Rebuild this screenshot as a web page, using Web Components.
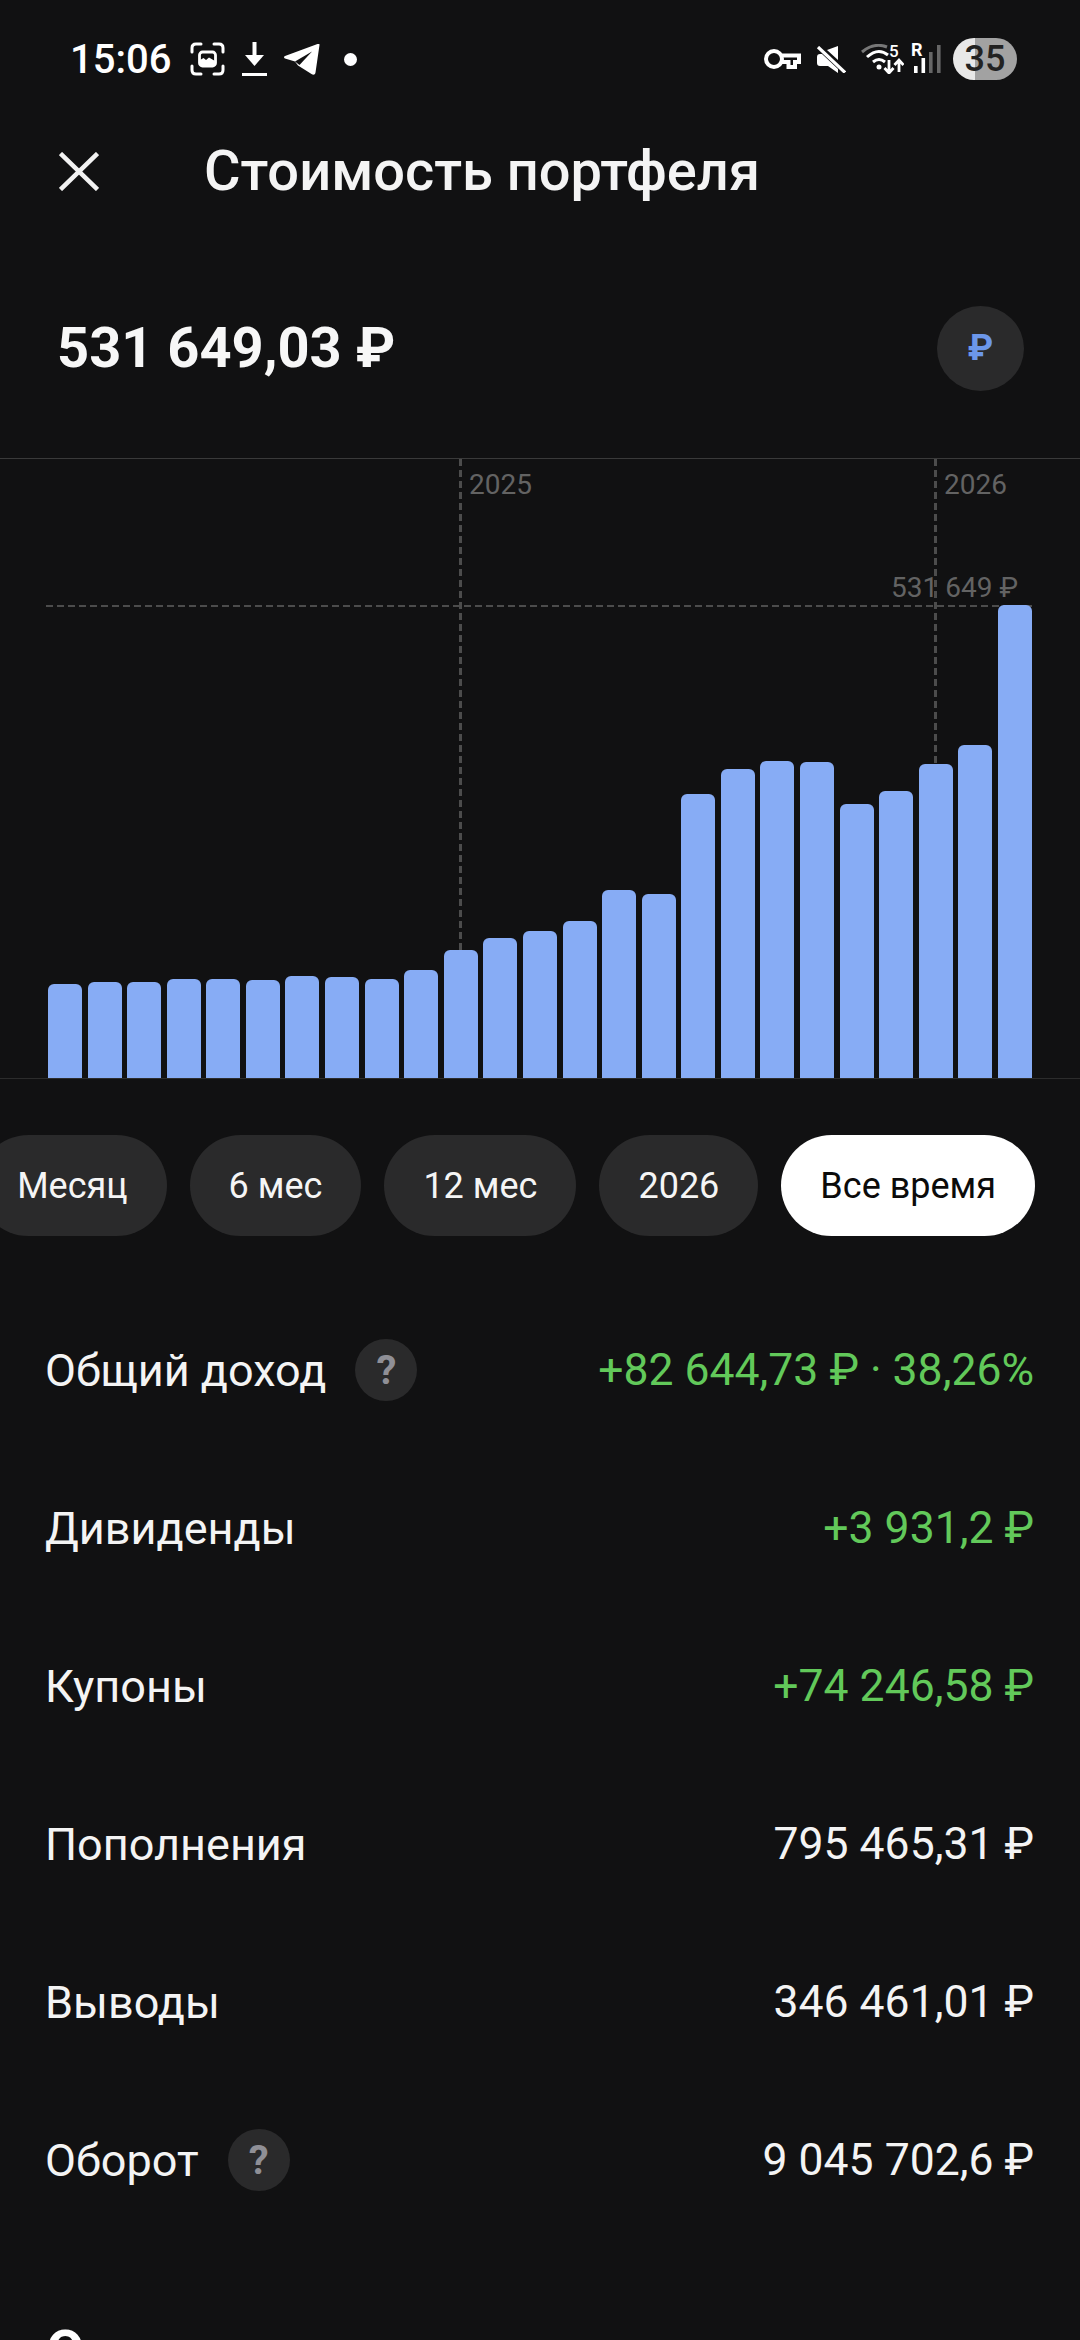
<!DOCTYPE html>
<html lang="ru">
<head>
<meta charset="utf-8">
<title>Стоимость портфеля</title>
<style>
html, body { margin: 0; background: #111112; }
body { width: 1080px; height: 2340px; overflow: hidden; font-family: Roboto, "Liberation Sans", sans-serif; color: #fff; }
</style>
</head>
<body>
<portfolio-screen></portfolio-screen>

<script>
const ICONS = {
    shot: '<svg width="35" height="34" viewBox="0 0 35 34" fill="none" stroke="#fff" stroke-width="3" stroke-linecap="round"><path d="M2 10V6q0-4 4-4h5M24 2h5q4 0 4 4v4M33 24v4q0 4-4 4h-5M11 32H6q-4 0-4-4v-4"/><rect x="9.500" y="10" width="16" height="14" rx="3" stroke-width="2.800"/><path d="M10 24v-6l3.500-2 2.500 2 3-2.500 6 3.500v5z" fill="#fff" stroke="none"/></svg>',
    download: '<svg width="25" height="34" viewBox="0 0 25 34" fill="none" stroke="#fff"><path d="M12.500 0v16" stroke-width="4"/><path d="M3 13h19l-9.500 11z" fill="#fff" stroke="none"/><path d="M0 32.500h25" stroke-width="3"/></svg>',
    telegram: '<svg width="36" height="31" viewBox="0 0 36 31" fill="#fff"><path d="M35.500 1 31.500 28.500c-.3 2-2 2.800-3.600 1.800L14 21.500l-3-4L1 14.500C-.3 14-.3 12.600 1 12L33.500 0c1.300-.4 2.200 0 2 1z"/><path d="M11 17.500 28 7.500 15.500 21z" fill="#111112"/></svg>',
    key: '<svg width="37" height="20" viewBox="0 0 37 20" fill="none" stroke="#fff" stroke-width="4"><circle cx="10" cy="10" r="8"/><path d="M18 6.500h17v6.500h-4v5h-6.500v-5H17"/></svg>',
    mute: '<svg width="30" height="27" viewBox="0 0 30 27" fill="#fff"><path d="M22 0v14L11 4zM4 8h2l16 15v4L12 20H4q-3 0-3-3v-6q0-3 3-3z"/><path d="M2 1l27 25.500" stroke="#fff" stroke-width="3.200" fill="none"/></svg>',
    wifi: '<svg width="43" height="30" viewBox="0 0 43 30" fill="none" stroke-width="3"><path d="M1 8Q13-2 26 3" stroke="#777"/><path d="M6 13Q17 3 27 11" stroke="#fff"/><path d="M12 18q6-5 12 0" stroke="#fff"/><circle cx="18" cy="23" r="2.500" fill="#fff" stroke="none"/><path d="M28 16v13M23.500 24l4.500 5 4.500-5M38 28V16M33.500 21l4.500-5 4.500 5" stroke="#fff" stroke-width="2.800"/></svg>',
    signal: '<svg width="27" height="28" viewBox="0 0 27 28" fill="#fff"><rect x="0" y="21" width="3.600" height="7"/><rect x="7.500" y="13" width="3.600" height="15"/><rect x="15" y="7" width="3.600" height="21" fill="#666"/><rect x="23" y="0" width="3.600" height="28" fill="#666"/></svg>',
    close: '<svg width="40" height="39" viewBox="0 0 40 39" fill="none" stroke="#f2f2f2" stroke-width="4.500"><path d="M1.500 1.500l37 36M38.500 1.500l-37 36"/></svg>'
};

// верх каждого столбика в пикселях экрана
const BAR_TOPS = [984, 982, 982, 979, 979, 980, 976, 977, 979, 970, 950, 938, 931, 921, 890, 894, 794, 769, 761, 762, 804, 791, 764, 745, 605];
const CHART_BOTTOM = 1078;

const templateStatusBar = document.createElement('template');
templateStatusBar.innerHTML = `
    <style>
    :host { display: flex; align-items: center; justify-content: space-between; height: 118px; padding: 0 63px 0 70px; box-sizing: border-box; }
    .group { display: flex; align-items: center; }
    .time { font-size: 40px; font-weight: 500; color: #fff; margin-right: 19px; }
    .ic { display: flex; }
    .dot { width: 13px; height: 13px; border-radius: 50%; background: #fff; margin-left: 24px; }
    .wrap { position: relative; }
    .tiny { position: absolute; font-weight: 500; line-height: 1; color: #fff; }
    .battery { width: 64px; height: 42px; border-radius: 21px; margin-left: 12px; background: linear-gradient(90deg, #e8e8e8 0 22px, #a2a2a2 22px); color: #222; font-size: 36px; font-weight: 500; display: flex; align-items: center; justify-content: center; }
    </style>
    <div class="group">
        <span class="time">15:06</span>
        <span class="ic">${ICONS.shot}</span>
        <span class="ic" style="margin-left:17px">${ICONS.download}</span>
        <span class="ic" style="margin-left:17px">${ICONS.telegram}</span>
        <span class="dot"></span>
    </div>
    <div class="group">
        <span class="ic">${ICONS.key}</span>
        <span class="ic" style="margin-left:15px">${ICONS.mute}</span>
        <span class="ic wrap" style="margin-left:15px">${ICONS.wifi}<span class="tiny" style="left:28px;top:-1px;font-size:17px">5</span></span>
        <span class="ic wrap" style="margin-left:10px">${ICONS.signal}<span class="tiny" style="left:-3px;top:-4px;font-size:18px;font-weight:700">R</span></span>
    </div>
`;

class StatusBar extends HTMLElement {
    constructor() {
        super();
        this._root = this.attachShadow({ mode: 'open' });
    }
    connectedCallback() {
        this._root.appendChild(templateStatusBar.content.cloneNode(true));
        const $battery = document.createElement('span');
        $battery.className = 'battery';
        $battery.textContent = '35';
        this._root.querySelectorAll('.group')[1].appendChild($battery);
    }
}
window.customElements.define('status-bar', StatusBar);

const templateChart = document.createElement('template');
templateChart.innerHTML = `
    <style>
    :host { display: block; position: relative; height: 621px; border-top: 1px solid #3a3a3a; border-bottom: 1px solid #2c2c2c; box-sizing: border-box; overflow: hidden; }
    .bars { position: absolute; left: 48px; width: 984px; bottom: 0; top: 0; display: flex; justify-content: space-between; align-items: flex-end; }
    .bar { width: 34px; background: #87acf5; border-radius: 6px 6px 0 0; }
    .vline { position: absolute; top: 0; bottom: 0; width: 3px; background: repeating-linear-gradient(180deg, #4c4c4c 0 7px, transparent 7px 11px); }
    .hline { position: absolute; left: 46px; right: 48px; height: 2px; background: repeating-linear-gradient(90deg, #4c4c4c 0 7px, transparent 7px 11px); }
    .label { position: absolute; font-size: 28px; line-height: 32px; color: #636363; white-space: nowrap; }
    </style>
    <div class="vline" style="left:459px"></div>
    <div class="vline" style="left:934px"></div>
    <div class="hline" style="top:146px"></div>
    <span class="label" style="left:469px;top:10px">2025</span>
    <span class="label" style="left:944px;top:10px">2026</span>
    <span class="label" style="right:62px;top:113px">531 649 ₽</span>
    <div class="bars"></div>
`;

class PortfolioChart extends HTMLElement {
    constructor() {
        super();
        this._root = this.attachShadow({ mode: 'open' });
    }
    connectedCallback() {
        this._root.appendChild(templateChart.content.cloneNode(true));
        const $bars = this._root.querySelector('.bars');
        BAR_TOPS.forEach((top) => {
            const $bar = document.createElement('div');
            $bar.className = 'bar';
            $bar.style.height = (CHART_BOTTOM - top) + 'px';
            $bars.appendChild($bar);
        });
    }
}
window.customElements.define('portfolio-chart', PortfolioChart);

const templatePill = document.createElement('template');
templatePill.innerHTML = `
    <style>
    :host { display: flex; align-items: center; justify-content: center; height: 101px; padding: 0 39px; border-radius: 51px; background: #2a2a2b; color: #f5f5f5; font-size: 36px; white-space: nowrap; flex: none; }
    :host([active]) { background: #fff; color: #0b0b0b; }
    </style>
    <slot></slot>
`;

class RangePill extends HTMLElement {
    constructor() {
        super();
        this._root = this.attachShadow({ mode: 'open' });
        this._root.appendChild(templatePill.content.cloneNode(true));
    }
}
window.customElements.define('range-pill', RangePill);

const templateRow = document.createElement('template');
templateRow.innerHTML = `
    <style>
    :host { display: flex; align-items: center; height: 158px; font-size: 45px; color: #f4f4f4; }
    .help { display: none; width: 62px; height: 62px; border-radius: 50%; background: #2a2a2b; color: #8f8f96; font-size: 40px; font-weight: 700; align-items: center; justify-content: center; margin-left: 29px; }
    :host([help]) .help { display: flex; }
    .value { margin-left: auto; font-size: 44.5px; }
    :host([green]) .value { color: #62c95a; }
    </style>
    <span><slot></slot></span>
    <span class="help">?</span>
    <span class="value"><slot name="value"></slot></span>
`;

class StatRow extends HTMLElement {
    constructor() {
        super();
        this._root = this.attachShadow({ mode: 'open' });
        this._root.appendChild(templateRow.content.cloneNode(true));
    }
}
window.customElements.define('stat-row', StatRow);

const templateScreen = document.createElement('template');
templateScreen.innerHTML = `
    <style>
    :host { display: block; height: 2340px; overflow: hidden; }
    .head { display: flex; align-items: center; height: 106px; padding-left: 59px; font-size: 56px; font-weight: 500; color: #f4f4f4; }
    .head span { margin-left: 105px; }
    .head svg { flex: none; }
    .total { display: flex; align-items: center; justify-content: space-between; height: 234px; padding: 14px 56px 0 57px; box-sizing: border-box; font-size: 56px; font-weight: 700; color: #f7f7f7; }
    .cur { width: 87px; height: 85px; border-radius: 50%; background: #2a2a2b; color: #6c97ea; font-size: 36px; font-weight: 700; display: flex; align-items: center; justify-content: center; }
    .pills { display: flex; justify-content: flex-end; gap: 23px; padding: 56px 45px 0 0; }
    .rows { padding: 55px 46px 0 45px; }
    .next { padding: 79px 46px 0; font-size: 56px; font-weight: 700; line-height: 66px; }
    </style>
    <status-bar></status-bar>
    <div class="head">${ICONS.close}<span>Стоимость портфеля</span></div>
    <div class="total">531 649,03 ₽<div class="cur">₽</div></div>
    <portfolio-chart></portfolio-chart>
    <div class="pills">
        <range-pill>Месяц</range-pill>
        <range-pill>6 мес</range-pill>
        <range-pill>12 мес</range-pill>
        <range-pill>2026</range-pill>
        <range-pill active>Все время</range-pill>
    </div>
    <div class="rows">
        <stat-row help green>Общий доход<span slot="value">+82 644,73 ₽ · 38,26%</span></stat-row>
        <stat-row green>Дивиденды<span slot="value">+3 931,2 ₽</span></stat-row>
        <stat-row green>Купоны<span slot="value">+74 246,58 ₽</span></stat-row>
        <stat-row>Пополнения<span slot="value">795 465,31 ₽</span></stat-row>
        <stat-row>Выводы<span slot="value">346 461,01 ₽</span></stat-row>
        <stat-row help>Оборот<span slot="value">9 045 702,6 ₽</span></stat-row>
    </div>
    <div class="next">О</div>
`;

class PortfolioScreen extends HTMLElement {
    constructor() {
        super();
        this._root = this.attachShadow({ mode: 'open' });
    }
    connectedCallback() {
        this._root.appendChild(templateScreen.content.cloneNode(true));
    }
}
window.customElements.define('portfolio-screen', PortfolioScreen);
</script>
</body>
</html>
